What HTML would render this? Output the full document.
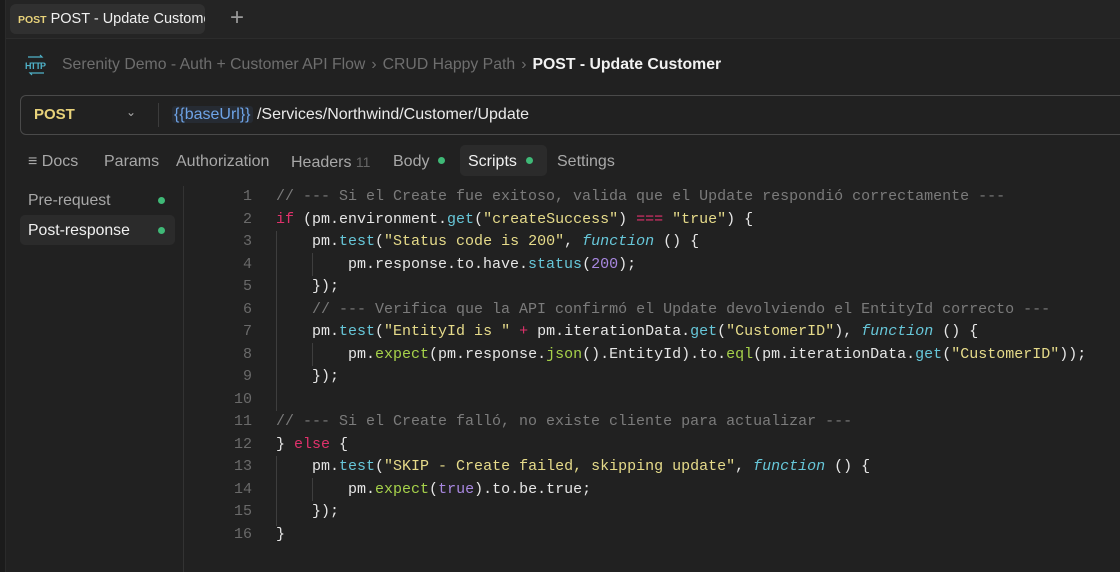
<!DOCTYPE html>
<html><head><meta charset="utf-8"><style>
*{margin:0;padding:0;box-sizing:border-box}
body{width:1120px;height:572px;overflow:hidden;background:#212121;font-family:"Liberation Sans",sans-serif;color:#c8c8c8;position:relative}
.abs{position:absolute}
.top{left:0;top:0;width:1120px;height:39px;background:#242424;border-bottom:1px solid #2c2c2c}
.lstrip{left:0;top:0;width:6px;height:572px;background:#1b1b1b;border-right:1px solid #2a2a2a}
.tab{left:10px;top:4px;width:195px;height:30px;background:#303030;border-radius:6px;white-space:nowrap;overflow:hidden;font-size:14.5px;line-height:30px;color:#f0f0f0;padding-left:8px}
.tab b{color:#e8d27a;font-size:10.5px;font-weight:bold;margin-right:4px}
.plus{left:230px;top:6px;font-size:24px;color:#9a9a9a;line-height:24px}
.bc{top:55px;left:62px;font-size:15.8px;color:#6e6e6e;white-space:nowrap;line-height:20px}
.bc .s{margin:0 6px;color:#6e6e6e}
.bc .cur{color:#f2f2f2;font-weight:bold}
.url{left:20px;top:95px;width:1110px;height:40px;border:1px solid #4a4a4a;border-radius:6px}
.meth{left:34px;top:106px;font-size:15px;font-weight:bold;color:#e8d27a}
.chev{left:126px;top:105px;font-size:12px;color:#aaa}
.sep{left:158px;top:103px;width:1px;height:24px;background:#3c3c3c}
.u{left:172px;top:105px;font-size:16px;color:#eaeaea;line-height:20px}
.u span{color:#6ea3e6;background:#262b33;border-radius:3px;padding:0 2px}
.tabs{top:152px;left:28px;font-size:16px;color:#a8a8a8;line-height:20px;white-space:nowrap}
.t{position:absolute;top:0}
.dot{display:inline-block;width:7px;height:7px;border-radius:50%;background:#3fb977;margin-left:9px;vertical-align:2px}
.active{left:460px;top:145px;width:87px;height:31px;background:#2b2b2b;border-radius:5px}
.side{font-size:15.8px;line-height:20px}
.sel{left:20px;top:215px;width:155px;height:30px;background:#2b2b2b;border-radius:5px}
.vdiv{left:183px;top:186px;width:1px;height:386px;background:#333}
.code{left:190px;top:186px;font-family:"Liberation Mono",monospace;font-size:15px;line-height:22.53px;white-space:pre;color:#e6e6e6}
.ln{display:inline-block;width:62px;text-align:right;color:#6a6a6a;margin-right:24px}
.c{color:#7b7b7b}.k{color:#e0316b}.s2{color:#e6db8a}.f{color:#67c7d9}.g{color:#a6d24a}.n{color:#a887e0}.i{color:#67c7d9;font-style:italic}
.guide{width:1px;background:#3e3e3e}
</style></head><body>
<div class="abs top"></div>
<div class="abs lstrip"></div>
<div class="abs tab"><b>POST</b>POST - Update Custome</div>
<div class="abs plus">+</div>
<svg class="abs" style="left:24px;top:54px" width="24" height="22" viewBox="0 0 24 22"><path d="M4 3h14l-2-2M20 19H6l2 2" stroke="#4fb2c9" fill="none" stroke-width="1.2"/><text x="1" y="15" font-family="Liberation Sans" font-size="9" font-weight="bold" fill="#4fb2c9" textLength="21">HTTP</text></svg>
<div class="abs bc">Serenity Demo - Auth + Customer API Flow<span class="s">›</span>CRUD Happy Path<span class="s">›</span><span class="cur">POST - Update Customer</span></div>
<div class="abs url"></div>
<div class="abs meth">POST</div>
<div class="abs chev">⌄</div>
<div class="abs sep"></div>
<div class="abs u"><span>{{baseUrl}}</span> /Services/Northwind/Customer/Update</div>
<div class="abs active"></div>
<div class="abs tabs" style="width:1000px;height:24px">
<span class="t" style="left:0">≡ Docs</span>
<span class="t" style="left:76px">Params</span>
<span class="t" style="left:148px">Authorization</span>
<span class="t" style="left:263px">Headers <span style="color:#666;font-size:14px">11</span></span>
<span class="t" style="left:365px">Body<span class="dot"></span></span>
<span class="t" style="left:440px;color:#f0f0f0">Scripts<span class="dot"></span></span>
<span class="t" style="left:529px">Settings</span>
</div>
<div class="abs sel"></div>
<div class="abs side" style="left:28px;top:191px;color:#a8a8a8">Pre-request</div>
<div class="abs dot" style="left:158px;top:197px;margin:0"></div>
<div class="abs side" style="left:28px;top:221px;color:#f0f0f0">Post-response</div>
<div class="abs dot" style="left:158px;top:227px;margin:0"></div>
<div class="abs vdiv"></div>
<div class="abs guide" style="left:276px;top:231px;height:180px"></div>
<div class="abs guide" style="left:312px;top:253px;height:23px"></div>
<div class="abs guide" style="left:312px;top:343px;height:23px"></div>
<div class="abs guide" style="left:276px;top:456px;height:70px"></div>
<div class="abs guide" style="left:312px;top:478px;height:23px"></div>
<div class="abs code"><span class="ln">1</span><span class="c">// --- Si el Create fue exitoso, valida que el Update respondió correctamente ---</span>
<span class="ln">2</span><span class="k">if</span> (pm.environment.<span class="f">get</span>(<span class="s2">"createSuccess"</span>) <span class="k">===</span> <span class="s2">"true"</span>) {
<span class="ln">3</span>    pm.<span class="f">test</span>(<span class="s2">"Status code is 200"</span>, <span class="i">function</span> () {
<span class="ln">4</span>        pm.response.to.have.<span class="f">status</span>(<span class="n">200</span>);
<span class="ln">5</span>    });
<span class="ln">6</span>    <span class="c">// --- Verifica que la API confirmó el Update devolviendo el EntityId correcto ---</span>
<span class="ln">7</span>    pm.<span class="f">test</span>(<span class="s2">"EntityId is "</span> <span class="k">+</span> pm.iterationData.<span class="f">get</span>(<span class="s2">"CustomerID"</span>), <span class="i">function</span> () {
<span class="ln">8</span>        pm.<span class="g">expect</span>(pm.response.<span class="g">json</span>().EntityId).to.<span class="g">eql</span>(pm.iterationData.<span class="f">get</span>(<span class="s2">"CustomerID"</span>));
<span class="ln">9</span>    });
<span class="ln">10</span>
<span class="ln">11</span><span class="c">// --- Si el Create falló, no existe cliente para actualizar ---</span>
<span class="ln">12</span>} <span class="k">else</span> {
<span class="ln">13</span>    pm.<span class="f">test</span>(<span class="s2">"SKIP - Create failed, skipping update"</span>, <span class="i">function</span> () {
<span class="ln">14</span>        pm.<span class="g">expect</span>(<span class="n">true</span>).to.be.true;
<span class="ln">15</span>    });
<span class="ln">16</span>}</div>
</body></html>
